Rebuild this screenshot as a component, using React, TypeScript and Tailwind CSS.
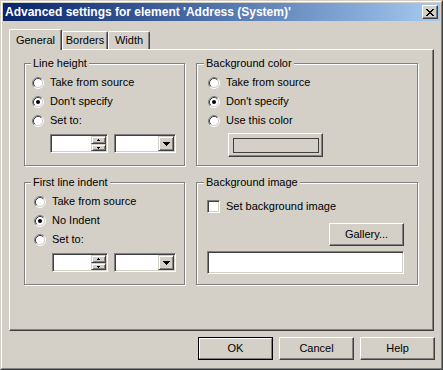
const raised =
  "border border-t-white border-l-white border-r-[#404040] border-b-[#404040] shadow-[inset_-1px_-1px_#808080]";
const sunken =
  "border border-t-[#808080] border-l-[#808080] border-r-white border-b-white shadow-[inset_1px_1px_#404040,inset_-1px_-1px_#d4d0c8]";
const smallBtn =
  "bg-[#d4d0c8] border border-t-[#d4d0c8] border-l-[#d4d0c8] border-r-[#404040] border-b-[#404040] shadow-[inset_1px_1px_#fff,inset_-1px_-1px_#808080]";

function Radio({ checked }: { checked?: boolean }) {
  return (
    <svg width="12" height="12" viewBox="0 0 12 12" className="shrink-0">
      <circle cx="6" cy="6" r="4.5" fill="#fff" />
      <path d="M2.11 9.89A5.5 5.5 0 0 1 9.89 2.11" stroke="#808080" fill="none" />
      <path d="M9.89 2.11A5.5 5.5 0 0 1 2.11 9.89" stroke="#fff" fill="none" />
      <path d="M2.82 9.18A4.5 4.5 0 0 1 9.18 2.82" stroke="#404040" fill="none" />
      <path d="M9.18 2.82A4.5 4.5 0 0 1 2.82 9.18" stroke="#d4d0c8" fill="none" />
      {checked && <circle cx="6" cy="6" r="2" fill="#000" />}
    </svg>
  );
}

function RadioRow({ label, checked }: { label: string; checked?: boolean }) {
  return (
    <div className="flex h-[19px] items-center gap-[6px]">
      <Radio checked={checked} />
      <span>{label}</span>
    </div>
  );
}

function UpArrow() {
  return (
    <svg width="3" height="2" viewBox="0 0 3 2">
      <rect x="1" y="0" width="1" height="1" fill="#000" />
      <rect x="0" y="1" width="3" height="1" fill="#000" />
    </svg>
  );
}

function DownArrow() {
  return (
    <svg width="3" height="2" viewBox="0 0 3 2">
      <rect x="0" y="0" width="3" height="1" fill="#000" />
      <rect x="1" y="1" width="1" height="1" fill="#000" />
    </svg>
  );
}

function ComboArrow() {
  return (
    <svg width="7" height="4" viewBox="0 0 7 4">
      <rect x="0" y="0" width="7" height="1" fill="#000" />
      <rect x="1" y="1" width="5" height="1" fill="#000" />
      <rect x="2" y="2" width="3" height="1" fill="#000" />
      <rect x="3" y="3" width="1" height="1" fill="#000" />
    </svg>
  );
}

function SpinBox({ className }: { className: string }) {
  return (
    <div className={`flex h-[19px] bg-white p-px ${sunken} ${className}`}>
      <div className="flex-1" />
      <div className="flex w-[15px] flex-col">
        <div className={`flex h-[8px] items-center justify-center ${smallBtn}`}>
          <UpArrow />
        </div>
        <div className={`flex flex-1 items-center justify-center ${smallBtn}`}>
          <DownArrow />
        </div>
      </div>
    </div>
  );
}

function Combo() {
  return (
    <div className={`flex h-[19px] w-[62px] bg-white p-px ${sunken}`}>
      <div className="flex-1" />
      <div className={`flex w-[16px] items-center justify-center ${smallBtn}`}>
        <ComboArrow />
      </div>
    </div>
  );
}

function Group({
  label,
  labelClass,
  children,
}: {
  label: string;
  labelClass: string;
  children: React.ReactNode;
}) {
  return (
    <div className="relative border border-[#808080] shadow-[inset_1px_1px_#fff,1px_1px_#fff]">
      <span className={`absolute -top-[7px] bg-[#d4d0c8] px-[2px] ${labelClass}`}>{label}</span>
      {children}
    </div>
  );
}

function CloseGlyph() {
  const rows = [
    [0, 7],
    [1, 6],
    [2, 5],
    [3, 3],
    [2, 5],
    [1, 6],
    [0, 7],
  ];
  return (
    <svg width="8" height="7" viewBox="0 0 8 7">
      {rows.map(([a, b], i) =>
        a === b ? (
          <rect key={i} x={a} y={i} width="2" height="1" fill="#000" />
        ) : (
          <g key={i}>
            <rect x={a} y={i} width="2" height="1" fill="#000" />
            <rect x={b - 1} y={i} width="2" height="1" fill="#000" />
          </g>
        )
      )}
    </svg>
  );
}

function PushButton({ label, isDefault }: { label: string; isDefault?: boolean }) {
  if (isDefault) {
    return (
      <button className="h-[23px] w-[75px] border border-black bg-[#d4d0c8] p-0">
        <div className="flex h-full items-center justify-center border border-t-white border-l-white border-r-[#808080] border-b-[#808080]">
          {label}
        </div>
      </button>
    );
  }
  return (
    <button className={`flex h-[23px] w-[75px] items-center justify-center bg-[#d4d0c8] ${raised}`}>
      {label}
    </button>
  );
}

export default function App() {
  return (
    <div className="h-[370px] w-[443px] border border-t-[#d4d0c8] border-l-[#d4d0c8] border-r-[#404040] border-b-[#404040] bg-[#d4d0c8] font-[Liberation_Sans,Arial,sans-serif] text-[11px] leading-[13px] text-black">
      <div className="flex h-full flex-col border border-t-white border-l-white border-r-[#808080] border-b-[#808080] p-px">
        {/* Title bar */}
        <div className="flex h-[18px] items-center justify-between bg-linear-to-r from-[#0a246a] to-[#a6caf0] pl-[2px] pr-[2px]">
          <span className="text-[12px] font-bold text-white">Advanced settings for element 'Address (System)'</span>
          <div className={`flex h-[14px] w-[16px] items-center justify-center bg-[#d4d0c8] ${raised}`}>
            <CloseGlyph />
          </div>
        </div>

        <div className="flex flex-col px-[6px] pt-[8px]">
          {/* Tabs */}
          <div className="flex h-[20px] items-end">
            <div className="relative z-10 -mb-px flex h-[21px] w-[53px] items-center justify-center rounded-t-[2px] border-t border-r border-l border-t-white border-r-[#404040] border-l-white bg-[#d4d0c8] shadow-[inset_-1px_0_#808080]">
              General
            </div>
            <div className="flex h-[18px] w-[46px] items-center justify-center rounded-t-[2px] border-t border-r border-l border-t-white border-r-[#404040] border-l-white shadow-[inset_-1px_0_#808080]">
              Borders
            </div>
            <div className="flex h-[18px] w-[42px] items-center justify-center rounded-t-[2px] border-t border-r border-l border-t-white border-r-[#404040] border-l-white shadow-[inset_-1px_0_#808080]">
              Width
            </div>
          </div>

          {/* Tab panel */}
          <div className={`h-[282px] pt-[13px] pl-[14px] ${raised}`}>
            <div className="grid grid-cols-[161px_222px] grid-rows-[103px_103px] gap-x-[11px] gap-y-[16px]">
              <Group label="Line height" labelClass="left-[6px]">
                <div className="pt-[9px] pl-[7px]">
                  <RadioRow label="Take from source" />
                  <RadioRow label="Don't specify" checked />
                  <RadioRow label="Set to:" />
                </div>
                <div className="mt-[4px] flex gap-[6px] pl-[25px]">
                  <SpinBox className="w-[58px]" />
                  <Combo />
                </div>
              </Group>

              <Group label="Background color" labelClass="left-[7px]">
                <div className="pt-[9px] pl-[11px]">
                  <RadioRow label="Take from source" />
                  <RadioRow label="Don't specify" checked />
                  <RadioRow label="Use this color" />
                </div>
                <div className="mt-[3px] pl-[31px]">
                  <div className={`flex h-[24px] w-[95px] items-center justify-center ${raised}`}>
                    <div className="h-[15px] w-[86px] border border-[#404040]" />
                  </div>
                </div>
              </Group>

              <Group label="First line indent" labelClass="left-[6px]">
                <div className="pt-[9px] pl-[9px]">
                  <RadioRow label="Take from source" />
                  <RadioRow label="No Indent" checked />
                  <RadioRow label="Set to:" />
                </div>
                <div className="mt-[4px] flex gap-[6px] pl-[27px]">
                  <SpinBox className="w-[56px]" />
                  <Combo />
                </div>
              </Group>

              <Group label="Background image" labelClass="left-[7px]">
                <div className="mt-[14px] flex h-[19px] items-center gap-[6px] pl-[10px]">
                  <span className={`h-[13px] w-[13px] shrink-0 bg-white ${sunken}`} />
                  <span>Set background image</span>
                </div>
                <div className="mt-[7px] flex justify-end pr-[13px]">
                  <PushButton label="Gallery..." />
                </div>
                <div className={`mt-[5px] ml-[10px] h-[23px] w-[197px] bg-white ${sunken}`} />
              </Group>
            </div>
          </div>

          {/* Dialog buttons */}
          <div className="mt-[6px] -mr-px flex justify-end gap-[6px]">
            <PushButton label="OK" isDefault />
            <PushButton label="Cancel" />
            <PushButton label="Help" />
          </div>
        </div>
      </div>
    </div>
  );
}
